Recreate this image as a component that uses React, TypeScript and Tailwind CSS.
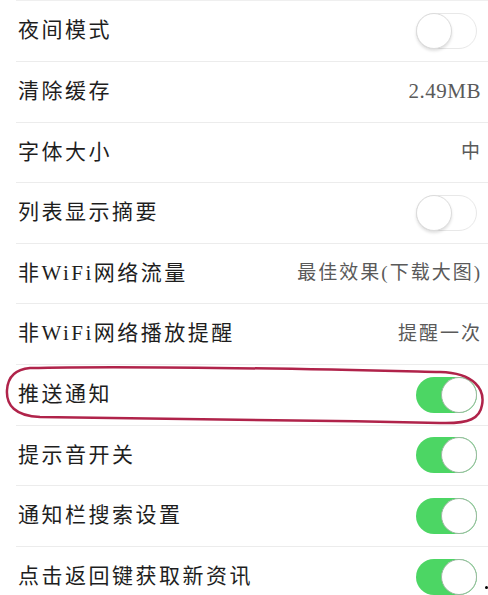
import React from "react"

type Row = {
  label: string
  value?: string
  latin?: boolean
  toggle?: boolean
}

const rows: Row[] = [
  { label: "夜间模式", toggle: false },
  { label: "清除缓存", value: "2.49MB", latin: true },
  { label: "字体大小", value: "中" },
  { label: "列表显示摘要", toggle: false },
  { label: "非WiFi网络流量", value: "最佳效果(下载大图)" },
  { label: "非WiFi网络播放提醒", value: "提醒一次" },
  { label: "推送通知", toggle: true },
  { label: "提示音开关", toggle: true },
  { label: "通知栏搜索设置", toggle: true },
  { label: "点击返回键获取新资讯", toggle: true },
]

function Toggle({ on }: { on: boolean }) {
  if (on) {
    return (
      <div className="relative mr-[11px] h-[36px] w-[61px] shrink-0 rounded-full bg-[#4cd664]">
        <div className="absolute right-0 top-0 h-[36px] w-[36px] rounded-full border border-[#9bb8a0] bg-white" />
      </div>
    )
  }
  return (
    <div className="relative mr-[11px] h-[36px] w-[61px] shrink-0 rounded-full border border-[#e8e8e8] bg-white">
      <div className="absolute -left-px -top-px h-[36px] w-[36px] rounded-full border border-[#dcdcdc] bg-white shadow-[0_2px_3px_rgba(0,0,0,0.12)]" />
    </div>
  )
}

export default function App() {
  return (
    <div
      className="relative h-[595px] w-[488px] overflow-hidden bg-white"
      style={{ fontFamily: '"Liberation Serif", "Noto Sans CJK SC", serif' }}
    >
      <div className="ml-4 border-t border-[#efefef]" />
      {rows.map((row, i) => (
        <div
          key={i}
          className={
            i === 0
              ? "ml-4 flex h-[60px] items-center justify-between pl-[2px]"
              : "ml-4 flex h-[60.6px] items-center justify-between border-t border-[#ececec] pl-[2px]"
          }
        >
          <span className="text-[21px] tracking-[2.5px] text-[#1e1e1e]">{row.label}</span>
          {row.toggle !== undefined ? (
            <Toggle on={row.toggle} />
          ) : row.latin ? (
            <span className="pr-[7px] text-[21px] tracking-[0.5px] text-[#5a5a5a]">{row.value}</span>
          ) : (
            <span className="pr-[6px] text-[19px] tracking-[2px] text-[#5a5a5a]">{row.value}</span>
          )}
        </div>
      ))}

      {/* hand-drawn red mark around 推送通知 */}
      <svg className="pointer-events-none absolute left-0 top-0" width="488" height="595" viewBox="0 0 488 595">
        <path
          d="M30 368 C150 365 350 370 440 372 C475 373 485 390 482 405 C480 418 470 424 440 423 C300 420 150 418 40 417 C15 416 6 405 7 390 C8 375 18 369 30 368 Z"
          fill="none"
          stroke="#b0234a"
          strokeWidth="2.5"
        />
      </svg>

      <span className="absolute left-[485px] top-[586px] h-[3px] w-[3px] rounded-full bg-black" />
    </div>
  )
}
